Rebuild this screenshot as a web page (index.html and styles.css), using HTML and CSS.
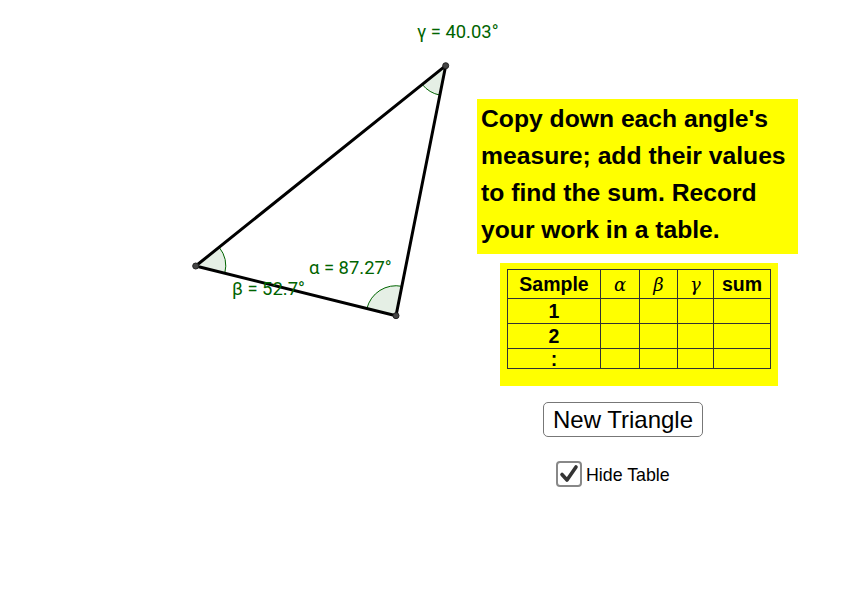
FILE: index.html
```html
<!DOCTYPE html>
<html>
<head>
<meta charset="utf-8">
<link rel="stylesheet" href="styles.css">
</head>
<body>
<div class="applet">
  <svg class="canvas" width="477" height="615" viewBox="0 0 477 615">
    <path class="sector" d="M195.7 266 L219.1 247.2 A30 30 0 0 1 224.8 273.2 Z"/>
    <path class="sector" d="M396 315.7 L366.9 308.5 A30 30 0 0 1 401.85 286.3 Z"/>
    <path class="sector" d="M445.7 65.7 L439.85 95.1 A30 30 0 0 1 422.3 84.5 Z"/>
    <polygon class="tri" points="195.7,266 445.7,65.7 396,315.7"/>
    <circle class="pt" cx="195.7" cy="266" r="3"/>
    <circle class="pt" cx="445.7" cy="65.7" r="3"/>
    <circle class="pt" cx="396" cy="315.7" r="3"/>
    <text class="lbl" x="417" y="38">γ = 40.03°</text>
    <text class="lbl" x="309" y="274">α = 87.27°</text>
    <text class="lbl" x="232" y="295">β = 52.7°</text>
  </svg>
  <div class="panel">
    <div class="instructions">Copy down each angle's<br>measure; add their values<br>to find the sum. Record<br>your work in a table.</div>
    <div class="table-box">
      <table class="record">
        <tr class="head">
          <td class="c1">Sample</td>
          <td class="c2 greek">α</td>
          <td class="c3 greek">β</td>
          <td class="c4 greek">γ</td>
          <td class="c5">sum</td>
        </tr>
        <tr class="row"><td>1</td><td></td><td></td><td></td><td></td></tr>
        <tr class="row"><td>2</td><td></td><td></td><td></td><td></td></tr>
        <tr class="row last"><td>:</td><td></td><td></td><td></td><td></td></tr>
      </table>
    </div>
    <button class="new-btn">New Triangle</button>
    <label class="check-row">
      <span class="box">
        <svg width="22" height="22" viewBox="0 0 22 22"><path d="M4 11.5 L9 17 L18 4" fill="none" stroke="#333" stroke-width="3.6" stroke-linecap="round" stroke-linejoin="round"/></svg>
      </span>
      <span class="check-text">Hide Table</span>
    </label>
  </div>
</div>
</body>
</html>
```

FILE: styles.css
```css
html, body {
  margin: 0;
  padding: 0;
  background: #fff;
}
.applet {
  display: flex;
  width: 845px;
  height: 615px;
  font-family: "Liberation Sans", Arial, sans-serif;
}
.canvas {
  flex: none;
  overflow: visible;
}
.sector {
  fill: #e5efe5;
  stroke: #006400;
  stroke-width: 1;
}
.tri {
  fill: none;
  stroke: #000;
  stroke-width: 3;
  stroke-linejoin: round;
}
.pt {
  fill: #444;
  stroke: #222;
  stroke-width: 1;
}
.lbl {
  font-family: Roboto, "Noto Sans", sans-serif;
  font-size: 18.4px;
  fill: #006400;
}
.panel {
  display: flex;
  flex-direction: column;
  align-items: flex-start;
  padding-top: 99px;
}
.instructions {
  box-sizing: border-box;
  width: 321px;
  height: 155px;
  background: #ffff00;
  padding: 1px 4px 6px 4px;
  font-weight: bold;
  font-size: 24.7px;
  line-height: 37px;
  color: #000;
  white-space: nowrap;
}
.table-box {
  box-sizing: border-box;
  margin-left: 23px;
  margin-top: 9px;
  width: 278px;
  height: 123px;
  background: #ffff00;
  padding: 6px 7px;
}
.record {
  border-collapse: collapse;
  width: 264px;
  table-layout: fixed;
}
.record td {
  border: 1px solid #333;
  padding: 0;
  text-align: center;
  font-weight: bold;
  font-size: 19.5px;
  line-height: 19px;
  color: #000;
}
.head td { height: 28px; }
.row td { height: 24px; }
.row.last td { height: 19px; line-height: 14px; }
.c1 { width: 92px; }
.c2 { width: 38px; }
.c3 { width: 37px; }
.c4 { width: 35px; }
.record td.greek {
  font-family: "DejaVu Serif", "Liberation Serif", serif;
  font-style: italic;
  font-weight: normal;
  font-size: 18px;
}
.new-btn {
  margin-left: 66px;
  margin-top: 16px;
  width: 160px;
  height: 35px;
  box-sizing: border-box;
  background: #fff;
  border: 1.5px solid #777;
  border-radius: 5px;
  font-family: "Liberation Sans", Arial, sans-serif;
  font-size: 24px;
  color: #000;
  padding: 0;
  line-height: 30px;
}
.check-row {
  display: flex;
  align-items: center;
  margin-left: 79px;
  margin-top: 24px;
  gap: 4px;
}
.box {
  box-sizing: border-box;
  width: 26px;
  height: 26px;
  border: 2px solid #888;
  border-radius: 4px;
  background: #fff;
  display: flex;
  align-items: center;
  justify-content: center;
}
.check-text {
  font-size: 17.8px;
  color: #000;
  padding-top: 2px;
}
```
